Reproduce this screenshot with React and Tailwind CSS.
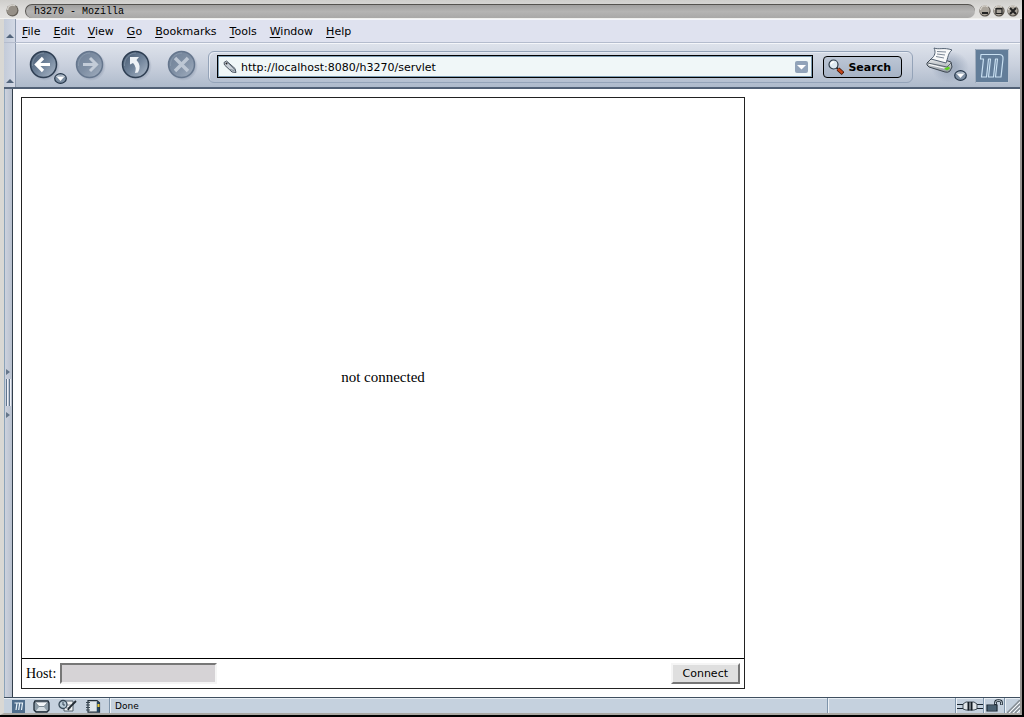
import React from "react";

const menus = ["File", "Edit", "View", "Go", "Bookmarks", "Tools", "Window", "Help"];

function Grippy() {
  return (
    <div className="flex w-3 shrink-0 flex-col items-center justify-end border-r border-[#8e9bb0] bg-linear-to-r from-[#c3cbd9] to-[#d3d9e5] pb-1">
      <svg width="8" height="4" viewBox="0 0 8 4">
        <path d="M0 4L4 0l4 4z" fill="#52647b" />
      </svg>
    </div>
  );
}

function Orb({ label, dim, children }) {
  const id = "orb-" + label;
  return (
    <button aria-label={label} className="h-8 w-8 shrink-0">
      <svg width="32" height="32" viewBox="0 0 32 32" fill="none">
        <defs>
          <linearGradient id={id} x1="0" y1="0" x2="1" y2="1">
            <stop offset="0" stopColor={dim ? "#6f8097" : "#43566d"} />
            <stop offset="0.5" stopColor={dim ? "#7f8fa4" : "#6f8299"} />
            <stop offset="1" stopColor={dim ? "#a3b0c1" : "#afbccb"} />
          </linearGradient>
          <radialGradient id={id + "-shade"}>
            <stop offset="0.7" stopColor="#7d8aa0" stopOpacity="0.6" />
            <stop offset="1" stopColor="#7d8aa0" stopOpacity="0" />
          </radialGradient>
        </defs>
        <circle cx="17" cy="17" r="15" fill={`url(#${id}-shade)`} />
        <circle cx="15.5" cy="15.5" r="13" fill={`url(#${id})`} stroke={dim ? "#65768d" : "#2e3e52"} strokeWidth="1.5" />
        <path d="M4.5 17C4 9 10 4 16 4" stroke="#9aa9ba" strokeOpacity="0.5" />
        {children}
      </svg>
    </button>
  );
}

function DropOrb() {
  return (
    <svg width="13" height="11" viewBox="0 0 13 11">
      <ellipse cx="6.5" cy="5.5" rx="5.8" ry="4.8" fill="#7d8fa3" stroke="#26374a" strokeWidth="1.2" />
      <path d="M2 4C3 1.6 10 1.6 11 4" stroke="#b5c0cc" fill="none" />
      <path d="M2.5 3.5h8L6.500 8z" fill="#fff" />
    </svg>
  );
}

function TitleBall({ children, label }) {
  return (
    <button aria-label={label} className="h-3 w-3">
      <svg width="12" height="12" viewBox="0 0 12 12">
        <circle cx="6" cy="6" r="5.6" fill="#565049" />
        <circle cx="5.6" cy="5.5" r="5" fill="#aaa49b" />
        <path d="M1.5 5A4.5 4.5 0 0 1 9 2" fill="none" stroke="#e4e0d9" />
        {children}
      </svg>
    </button>
  );
}

function TitleBar() {
  return (
    <header className="flex h-[19px] shrink-0 items-center border-b border-[#f0f0ee] bg-linear-to-b from-[#cfcecb] via-[#dddcda] to-[#e2e1df] pt-[3px] pr-[3px] pl-[6px]">
      <svg width="13" height="13" viewBox="0 0 13 13" className="shrink-0">
        <circle cx="6.5" cy="6.5" r="6" fill="#666159" />
        <circle cx="6" cy="6" r="5.3" fill="#969087" />
        <path d="M1.5 6A5 5 0 0 1 9 1.7" stroke="#d3d0ca" fill="none" strokeWidth="1.5" />
      </svg>
      <h1 className="mr-1 ml-[6px] h-[14px] min-w-0 flex-1 overflow-hidden rounded-lg border-t border-l border-[#55534f] bg-linear-to-b from-[#a09f9e] via-[#b5b4b3] to-[#a9a8a7] pl-2 font-['Liberation_Mono',monospace] text-[10px] leading-[14px] whitespace-pre text-black">
        h3270 - Mozilla
      </h1>
      <div className="flex shrink-0 gap-[2px]">
        <TitleBall label="Minimize"><path d="M3 8h6" stroke="#222" strokeWidth="2" /></TitleBall>
        <TitleBall label="Maximize"><path d="M3 3.5h6v5H3zM3 4h6" stroke="#222" fill="none" strokeWidth="1.2" /></TitleBall>
        <TitleBall label="Close"><path d="M3 3l6 6M9 3L3 9" stroke="#222" strokeWidth="2" /></TitleBall>
      </div>
    </header>
  );
}

function MenuBar() {
  return (
    <div className="flex h-6 shrink-0 border-b border-[#b4bccd]">
      <Grippy />
      <nav className="flex flex-1 items-center gap-[13px] border-t border-[#f5f6fa] bg-[#dfe2ef] pt-[2px] pl-[6px]">
        {menus.map((m) => (
          <button key={m} className="leading-4">
            <span className="underline underline-offset-2">{m[0]}</span>
            {m.slice(1)}
          </button>
        ))}
      </nav>
    </div>
  );
}

function Printer() {
  return (
    <svg width="46" height="38" viewBox="0 0 46 38" fill="none">
      <defs>
        <radialGradient id="printer-shade">
          <stop offset="0.3" stopColor="#8b9ab0" stopOpacity="0.6" />
          <stop offset="1" stopColor="#8b9ab0" stopOpacity="0" />
        </radialGradient>
        <linearGradient id="printer-body" x1="0" y1="0" x2="0" y2="1">
          <stop offset="0" stopColor="#f4f5f6" />
          <stop offset="1" stopColor="#8f979f" />
        </linearGradient>
      </defs>
      <ellipse cx="25" cy="20" rx="19" ry="16" fill="url(#printer-shade)" />
      <path d="M7 11l3-1 16 5 1 5-2 4q-2 2-5 1L4 20q-3-2-2-4z" fill="url(#printer-body)" stroke="#3d4751" />
      <path d="M3 16l19 4 4-4" stroke="#5c6670" />
      <path d="M4 17.500l17 4" stroke="#fff" />
      <path d="M9 1c5 2 10-1 18 2-4 3-4 8-6 13L6 12c4-3 5-7 3-11z" fill="#f8f9fa" stroke="#536172" />
      <path d="M12 4.500l9 .500M12 7l8 1M11 9.500l8 1.500" stroke="#7d8896" />
      <path d="M19 21.500l5-2 1 2-3 2z" fill="#5fd022" />
    </svg>
  );
}

function Toolbar() {
  return (
    <div className="flex h-[46px] shrink-0 border-b-2 border-[#526176]">
      <Grippy />
      <div className="flex min-w-0 flex-1 items-center border-t border-[#f4f6fa] bg-linear-to-b from-[#dde2eb] via-[#c9d0dd] to-[#aebacb] pr-[11px] pl-3">
        <div className="flex shrink-0 items-center gap-[14px] pb-[2px]">
          <div className="relative flex">
            <Orb label="Back"><path d="M22 15.500H9M15 9l-6.500 6.500L15 22" stroke="#fff" strokeWidth="3.200" /></Orb>
            <button aria-label="Back history" className="absolute top-6 left-[26px]"><DropOrb /></button>
          </div>
          <Orb label="Forward" dim><path d="M9 15.500h13M16 9l6.500 6.500L16 22" stroke="#c3ccd8" strokeWidth="3" /></Orb>
          <Orb label="Reload">
            <path d="M10 15.500V8h9l-2.500 3q5.500 6 1.500 12.500l-3 .500q2-6-2-10z" fill="#eef2f6" />
          </Orb>
          <Orb label="Stop" dim><path d="M9 9l13 13M22 9L9 22" stroke="#bdc7d4" strokeWidth="3.500" /></Orb>
        </div>
        <div className="mt-[2px] ml-[10px] flex h-8 min-w-0 flex-1 items-center gap-[10px] rounded-md border border-[#94a3b8] pr-[10px] pl-2 shadow-[inset_1px_1px_0_#e6eaf2]">
          <label className="flex h-[23px] min-w-0 flex-1 items-center border border-black bg-[#f0f7f8] pr-1 pl-[5px] shadow-[inset_0_0_0_1px_#7f9db3]">
            <svg width="14" height="14" viewBox="0 0 14 14" className="shrink-0">
              <path d="M1 2.500L3.500 1l8.500 7.500 1 4-4-.500L1.500 5z" fill="#c9d0d7" stroke="#4a5560" />
              <path d="M4 2l8 8M6.500 9.500l5 1" stroke="#7c8893" />
              <circle cx="3.500" cy="3.500" r="1" fill="#222" />
            </svg>
            <input aria-label="Location" defaultValue="http://localhost:8080/h3270/servlet" className="ml-1 min-w-0 flex-1 bg-transparent pt-[2px] leading-4 outline-none" />
            <svg width="13" height="12" viewBox="0 0 13 12" className="shrink-0">
              <rect width="13" height="12" rx="2" fill="#91a3b9" />
              <path d="M2 4h9L6.500 8.500z" fill="#fff" />
            </svg>
          </label>
          <button className="flex h-[22px] shrink-0 items-center gap-1 rounded-sm border border-black bg-linear-to-b from-[#bcc6d5] to-[#a7b3c5] pr-[10px] pl-1 font-bold">
            <svg width="16" height="16" viewBox="0 0 16 16">
              <path d="M8 8l2 2" stroke="#222" strokeWidth="2" />
              <path d="M10 10l5 4.500" stroke="#3d1405" strokeWidth="4" />
              <path d="M10 10l4.500 4" stroke="#c64518" strokeWidth="2.500" />
              <circle cx="5.500" cy="5.500" r="4.500" fill="#dfeaf2" stroke="#2e3b48" strokeWidth="1.200" />
              <path d="M3 5.500Q3 3 6 3" stroke="#fff" fill="none" strokeWidth="1.500" />
            </svg>
            <span className="pt-[2px] leading-4">Search</span>
          </button>
        </div>
        <button aria-label="Print" className="relative ml-3 h-[38px] w-[46px] shrink-0">
          <Printer />
          <span className="absolute top-[23px] left-[29px]"><DropOrb /></span>
        </button>
        <a href="#mozilla" aria-label="Mozilla" className="mt-px ml-1 shrink-0">
          <svg width="34" height="34" viewBox="0 0 34 34">
            <path d="M0 0h34v34H0z" fill="#bac5d3" />
            <path d="M0 34V0h34" fill="none" stroke="#8393a8" />
            <path d="M1 1h32v32H1z" fill="#627d99" />
            <path d="M6 5.500H24Q28.500 5.500 28 10L26 28H20.500L22.500 10H20.500L18.500 28H13.500L15.500 10H13.500L11.500 28H6.500L8.500 10H5.500Z" fill="none" stroke="#c9e0f2" strokeWidth="1.200" strokeLinejoin="round" />
          </svg>
        </a>
      </div>
    </div>
  );
}

function Sidebar() {
  return (
    <aside className="flex w-[9px] shrink-0 flex-col items-center justify-center border-r border-l border-r-[#333f4c] border-l-[#8ba3b9] bg-linear-to-r from-[#cdd2de] to-[#b7c0ce]">
      <svg width="7" height="50" viewBox="0 0 7 50">
        <path d="M1 1l4 3-4 3zM1 44l4 3-4 3z" fill="#65768a" />
        <path d="M1.500 11v27M4.500 11v27" stroke="#60758c" />
        <path d="M2.500 11v27M5.500 11v27" stroke="#eef0f6" />
      </svg>
    </aside>
  );
}

function Page() {
  return (
    <main className="flex min-w-0 flex-1 bg-white p-2">
      <form onSubmit={(e) => e.preventDefault()} className="flex w-[724px] max-w-full flex-col border border-[#222] font-['Liberation_Serif',serif] text-sm text-black">
        <div className="flex flex-1 items-center justify-center text-[15px]">not connected</div>
        <div className="flex h-[30px] items-center border-t border-black pr-1 pl-1">
          <label htmlFor="host">Host:</label>
          <input id="host" className="ml-1 h-[21px] w-[157px] border-2 border-t-[#777] border-r-[#f5f5f5] border-b-[#f5f5f5] border-l-[#777] bg-[#d6d3d6] outline-none" />
          <button className="ml-auto h-[21px] border-2 border-t-[#f5f5f5] border-r-[#777] border-b-[#777] border-l-[#f5f5f5] bg-[#dfdfdf] px-[10px] pt-px font-['DejaVu_Sans',sans-serif] text-[11px] leading-4">
            Connect
          </button>
        </div>
      </form>
    </main>
  );
}

function StatusBar() {
  const divider = "border-l border-[#7e94aa] shadow-[inset_1px_0_0_#eef2f6]";
  return (
    <footer className="flex h-4 shrink-0 border-t border-[#3f4f60] bg-[#c5d1de] text-[9px] shadow-[inset_0_1px_0_#e8eef4]">
      <div className="flex w-[105px] shrink-0 items-center gap-2 pt-px pl-2">
        <button aria-label="Navigator">
          <svg width="13" height="13" viewBox="0 0 13 13">
            <path d="M0 0h13v13H0z" fill="#4f6d8c" />
            <path d="M2.500 3h8l-1 7M5 3l-1 7M7.700 3l-1 7" fill="none" stroke="#eaf4fb" strokeWidth="1.200" />
          </svg>
        </button>
        <button aria-label="Mail">
          <svg width="17" height="13" viewBox="0 0 17 13">
            <path d="M2 1h13l1 2v7l-2 2H3l-2-2V3z" fill="#8e9da8" stroke="#1f2b36" strokeWidth="1.300" />
            <path d="M2 2l4 4.500h5L15 2z" fill="#f3f6f8" stroke="#6a7782" strokeWidth=".8" />
            <path d="M3 11l3-4h5l3 4z" fill="#d5dde2" />
          </svg>
        </button>
        <button aria-label="Composer">
          <svg width="20" height="14" viewBox="0 0 20 14">
            <path d="M6 2h9v10H6z" fill="#f1f3f4" stroke="#53616d" />
            <path d="M8 9h5M9 6h4" stroke="#8a969f" />
            <circle cx="5" cy="5.500" r="4" fill="#b9cbd7" stroke="#364756" strokeWidth="1.300" />
            <path d="M5 3v3h2" stroke="#364756" fill="none" />
            <path d="M18 2l-7 7-1 2" stroke="#222b33" strokeWidth="1.800" fill="none" />
          </svg>
        </button>
        <button aria-label="Address Book">
          <svg width="15" height="13" viewBox="0 0 15 13">
            <path d="M2 .700h9l2.500 2v9.500H2z" fill="#dfe7ec" stroke="#222e39" strokeWidth="1.200" />
            <path d="M12 2v10" stroke="#24445f" strokeWidth="2.500" />
            <path d="M12.500 4v3" stroke="#edcb35" strokeWidth="2" />
            <path d="M0 2.500h4M0 5h4M0 7.500h4M0 10h4" stroke="#374652" />
          </svg>
        </button>
      </div>
      <div className={`flex flex-1 items-center pt-[2px] pl-[5px] ${divider}`}>Done</div>
      <div className={`w-32 shrink-0 ${divider}`} />
      <div className={`flex w-7 shrink-0 items-center justify-center pt-px ${divider}`}>
        <svg width="26" height="12" viewBox="0 0 26 12">
          <path d="M0 4.500h7M0 8.500h7M19 4.500h7M19 8.500h7" stroke="#18232d" />
          <path d="M6 4l3-2h8l3 2v5l-3 1H9L6 9z" fill="#dfe4e8" stroke="#1f2b35" strokeWidth=".8" />
          <path d="M11.500 2v8.500M14.500 2v8.500" stroke="#151d24" strokeWidth="2" />
        </svg>
      </div>
      <div className={`flex w-[21px] shrink-0 items-center justify-center ${divider}`}>
        <svg width="17" height="13" viewBox="0 0 17 13">
          <path d="M1 6h10v6H1z" fill="#6d8596" stroke="#17232e" strokeWidth="1.200" />
          <path d="M1 8h10M1 10h10" stroke="#273b4c" />
          <path d="M9.500 6V3.500q0-2 3-2t3 2V6" fill="none" stroke="#17232e" strokeWidth="2.600" />
          <path d="M9.500 5V3.500q0-2 3-2t3 2V5.500" fill="none" stroke="#cbd5dd" />
        </svg>
      </div>
      <div className={`flex w-4 shrink-0 items-end justify-end ${divider}`}>
        <svg width="13" height="13" viewBox="0 0 13 13">
          <path d="M0 13L13 0M4 13l9-9M8 13l5-5" stroke="#858c92" strokeWidth="1.500" />
          <path d="M2 13L13 2M6 13l7-7M10 13l3-3" stroke="#f7f8f9" />
        </svg>
      </div>
    </footer>
  );
}

export default function App() {
  return (
    <div className="flex h-screen flex-col border-r-2 border-b-2 border-black bg-[#d9d8d6] font-['DejaVu_Sans',sans-serif] text-[11px] text-black">
      <TitleBar />
      <div className="flex min-h-0 flex-1 flex-col border-r-2 border-b-2 border-l-4 border-r-[#999693] border-b-[#aaa8a3] border-l-[#d9d8d4]">
        <MenuBar />
        <Toolbar />
        <div className="flex min-h-0 flex-1">
          <Sidebar />
          <Page />
        </div>
        <StatusBar />
      </div>
    </div>
  );
}
